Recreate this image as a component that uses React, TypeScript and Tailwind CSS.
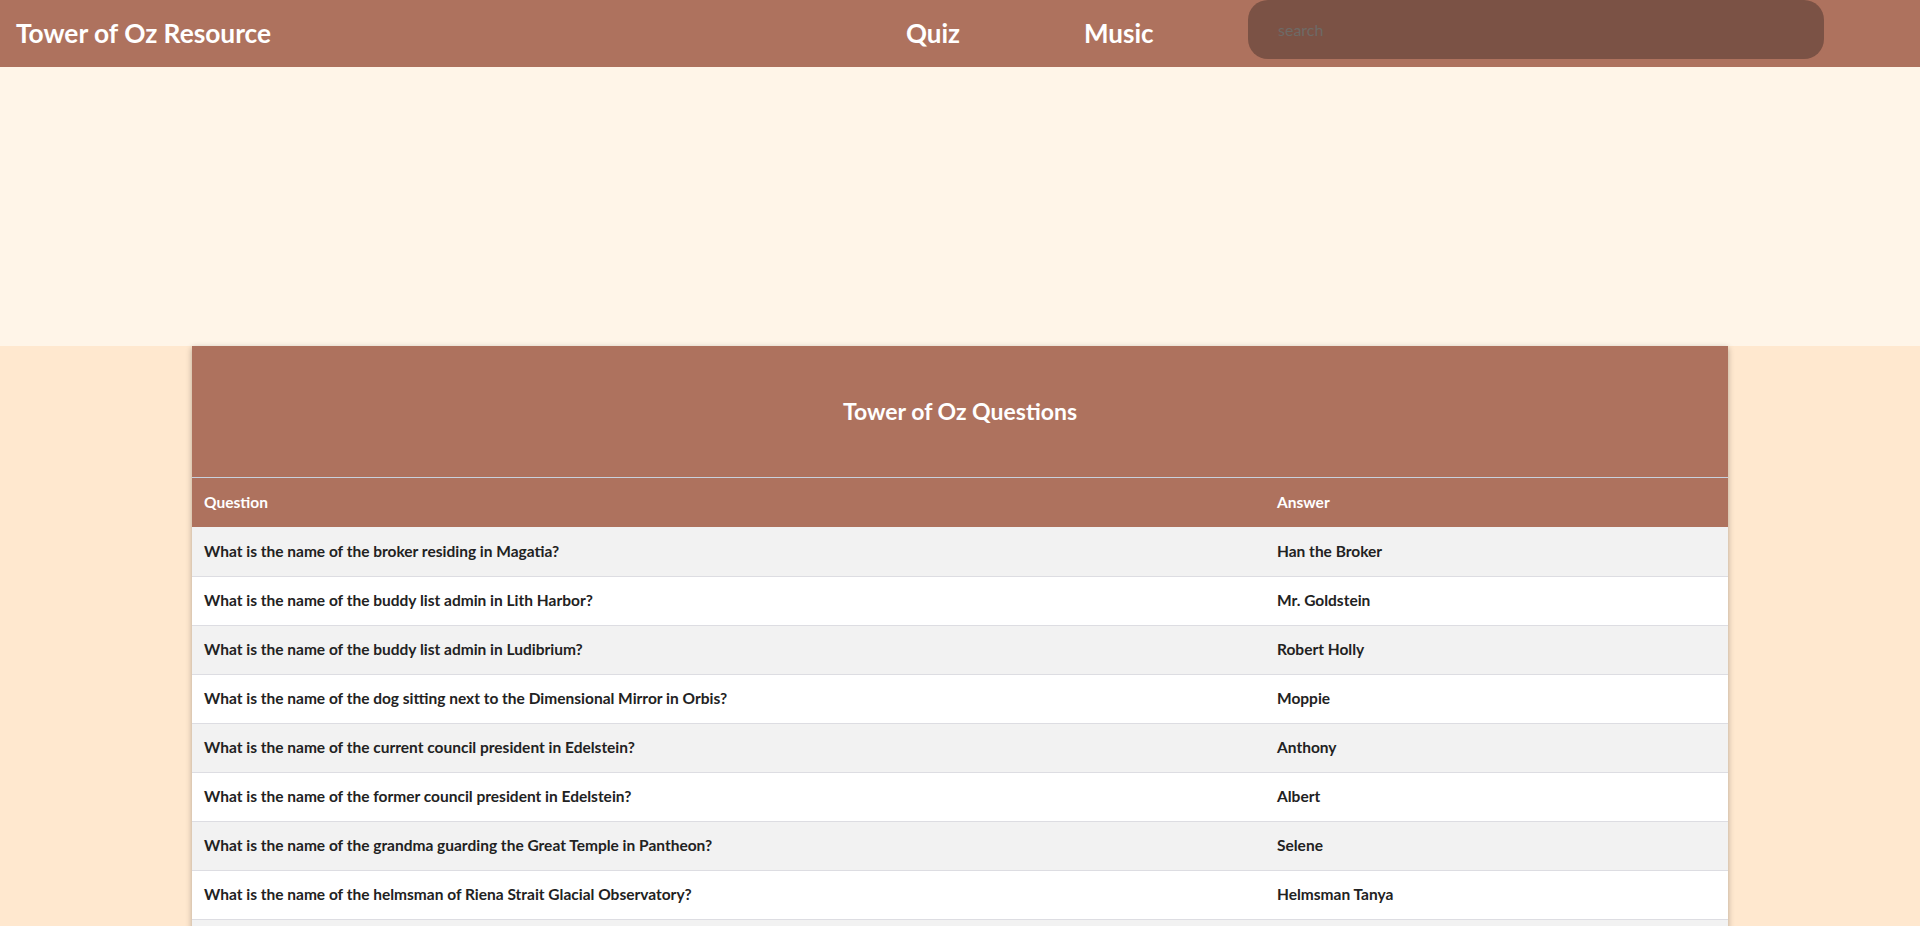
import React from "react";

type QA = { question: string; answer: string };

const questions: QA[] = [
  { question: "What is the name of the broker residing in Magatia?", answer: "Han the Broker" },
  { question: "What is the name of the buddy list admin in Lith Harbor?", answer: "Mr. Goldstein" },
  { question: "What is the name of the buddy list admin in Ludibrium?", answer: "Robert Holly" },
  { question: "What is the name of the dog sitting next to the Dimensional Mirror in Orbis?", answer: "Moppie" },
  { question: "What is the name of the current council president in Edelstein?", answer: "Anthony" },
  { question: "What is the name of the former council president in Edelstein?", answer: "Albert" },
  { question: "What is the name of the grandma guarding the Great Temple in Pantheon?", answer: "Selene" },
  { question: "What is the name of the helmsman of Riena Strait Glacial Observatory?", answer: "Helmsman Tanya" },
  { question: "What is the name of the hair stylist in Henesys?", answer: "Natalie" },
  { question: "What is the name of the item creator in Leafre?", answer: "Mos" },
  { question: "What is the name of the leader of the Black Wings?", answer: "Black Mage" },
  { question: "What is the name of the nurse in Ellinia?", answer: "Betty" },
];

const font = "font-['Lato','Noto_Sans',sans-serif]";

function Navbar() {
  return (
    <nav className="flex h-[67px] items-center bg-[#ae725e]">
      <div className="w-[906px] pl-4">
        <span className="text-[26.3px] font-bold text-white">Tower of Oz Resource</span>
      </div>
      <a className="w-[178px] text-[26px] font-bold text-white">Quiz</a>
      <a className="w-[164px] text-[26px] font-bold text-white">Music</a>
      <div className="flex h-[59px] w-[576px] items-center self-start rounded-[20px] bg-[#7b5245] pl-[30px]">
        <input
          placeholder="search"
          className="w-full bg-transparent text-[16px] text-white outline-none placeholder:text-[#6e6a66]"
        />
      </div>
    </nav>
  );
}

export default function App() {
  return (
    <div className={`${font} min-h-screen bg-[#ffe8cf]`}>
      <Navbar />
      <div className="h-[279px] bg-[#fff5e8]" />
      <main className="pb-12">
        <div className="mx-auto w-[1536px] shadow-[0_2px_6px_rgba(0,0,0,0.3)]">
          <div className="flex h-[132px] items-center justify-center border-b border-[#c8d1dd] bg-[#ae725e]">
            <h1 className="text-[23px] font-bold text-white">Tower of Oz Questions</h1>
          </div>
          <table className="w-full border-collapse text-left text-[15.5px]">
            <thead>
              <tr className="h-[49px] bg-[#ae725e] text-white">
                <th className="w-[1073px] px-3 font-bold">Question</th>
                <th className="px-3 font-bold">Answer</th>
              </tr>
            </thead>
            <tbody>
              {questions.map((q, i) => (
                <tr
                  key={q.question}
                  className={`h-[49px] border-b border-[#dddde2] font-bold text-[#222] ${
                    i % 2 === 0 ? "bg-[#f2f2f2]" : "bg-white"
                  }`}
                >
                  <td className="px-3">{q.question}</td>
                  <td className="px-3">{q.answer}</td>
                </tr>
              ))}
            </tbody>
          </table>
        </div>
      </main>
    </div>
  );
}
